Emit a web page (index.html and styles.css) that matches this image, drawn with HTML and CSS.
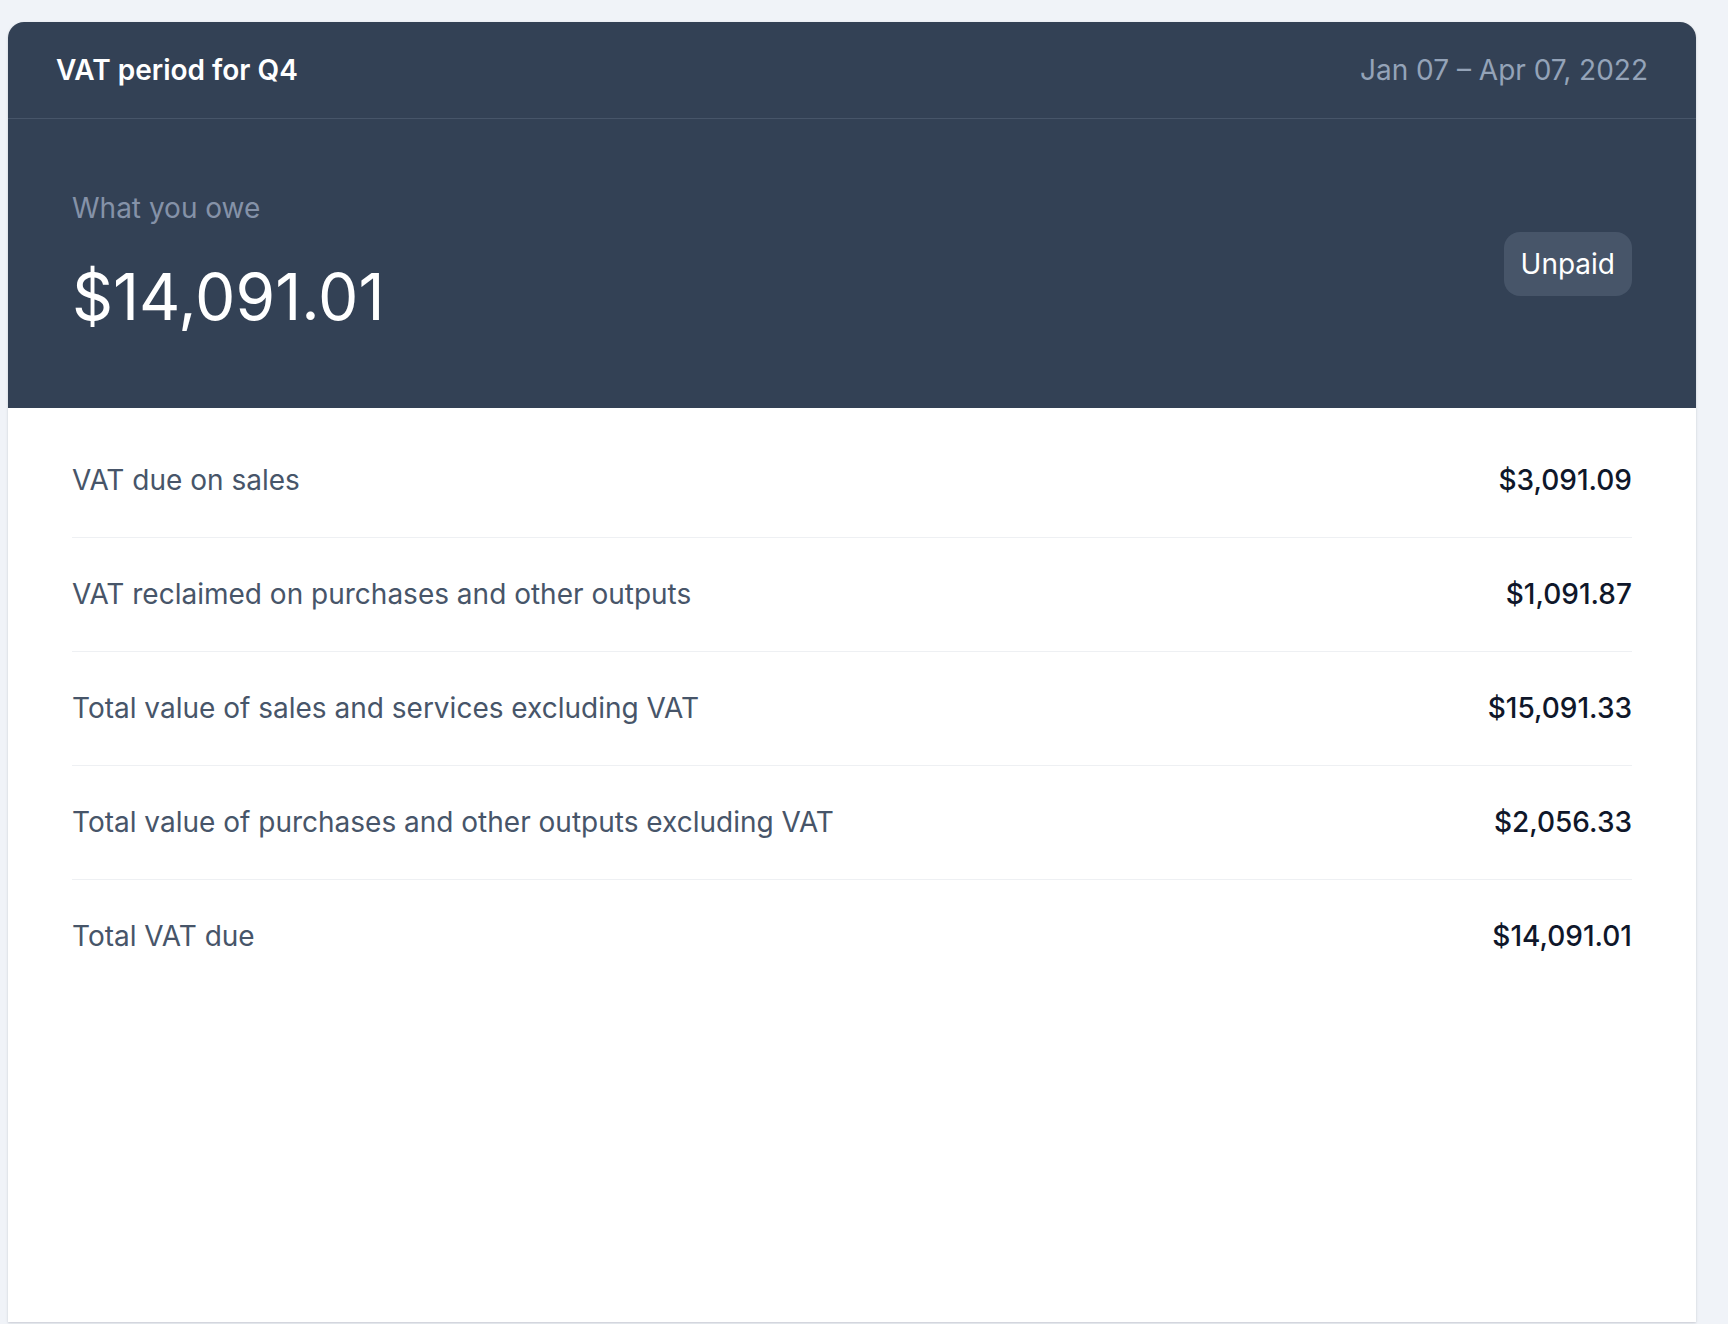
FILE: index.html
```html
<!DOCTYPE html>
<html lang="en">
<head>
<meta charset="utf-8">
<title>VAT period for Q4</title>
<link rel="stylesheet" href="styles.css">
</head>
<body>
<main class="page">
  <section class="card">
    <header class="card-header">
      <h1 class="title">VAT period for Q4</h1>
      <span class="period">Jan 07 – Apr 07, 2022</span>
    </header>
    <div class="hero">
      <div class="owe">
        <p class="owe-label">What you owe</p>
        <p class="owe-amount">$14,091.01</p>
      </div>
      <span class="badge">Unpaid</span>
    </div>
    <ul class="rows">
      <li class="row"><span class="row-label">VAT due on sales</span><span class="row-value">$3,091.09</span></li>
      <li class="row"><span class="row-label">VAT reclaimed on purchases and other outputs</span><span class="row-value">$1,091.87</span></li>
      <li class="row"><span class="row-label">Total value of sales and services excluding VAT</span><span class="row-value">$15,091.33</span></li>
      <li class="row"><span class="row-label">Total value of purchases and other outputs excluding VAT</span><span class="row-value">$2,056.33</span></li>
      <li class="row"><span class="row-label">Total VAT due</span><span class="row-value">$14,091.01</span></li>
    </ul>
  </section>
</main>
</body>
</html>
```

FILE: styles.css
```css
* { box-sizing: border-box; }
html, body {
  margin: 0;
  padding: 0;
  background: #f0f3f8;
  font-family: Inter, "Noto Sans", "Liberation Sans", sans-serif;
}
.page {
  padding: 22px 32px 0 8px;
  height: 1324px;
  overflow: hidden;
}
.card {
  background: #ffffff;
  border-radius: 16px 16px 0 0;
  min-height: 1300px;
  box-shadow: 0 1px 3px rgba(15, 23, 42, 0.12), 0 1px 2px rgba(15, 23, 42, 0.06);
  overflow: hidden;
}
.card-header {
  background: #334155;
  display: flex;
  justify-content: space-between;
  align-items: center;
  padding: 27px 48px;
  border-bottom: 1px solid #475569;
}
.title {
  margin: 0;
  font-size: 28px;
  line-height: 42px;
  font-weight: 600;
  color: #ffffff;
}
.period {
  font-size: 28px;
  line-height: 42px;
  color: #94a3b8;
}
.hero {
  background: #334155;
  display: flex;
  justify-content: space-between;
  align-items: center;
  padding: 68px 64px 71px;
}
.owe p { margin: 0; }
.owe-label {
  font-size: 28px;
  line-height: 42px;
  color: #8592a8;
  margin-bottom: 28px !important;
}
.owe-amount {
  font-size: 64px;
  line-height: 80px;
  color: #ffffff;
  font-weight: 400;
}
.badge {
  background: #475569;
  color: #ffffff;
  font-size: 28px;
  line-height: 42px;
  padding: 11px 17px;
  border-radius: 16px;
  margin-top: 4px;
}
.rows {
  list-style: none;
  margin: 0;
  padding: 16px 64px;
}
.row {
  display: flex;
  justify-content: space-between;
  align-items: center;
  padding: 36px 0;
  font-size: 28px;
  line-height: 41px;
}
.row + .row {
  border-top: 1px solid #eef0f3;
}
.row-label {
  color: #475569;
}
.row-value {
  color: #0f172a;
  font-weight: 500;
}
```
